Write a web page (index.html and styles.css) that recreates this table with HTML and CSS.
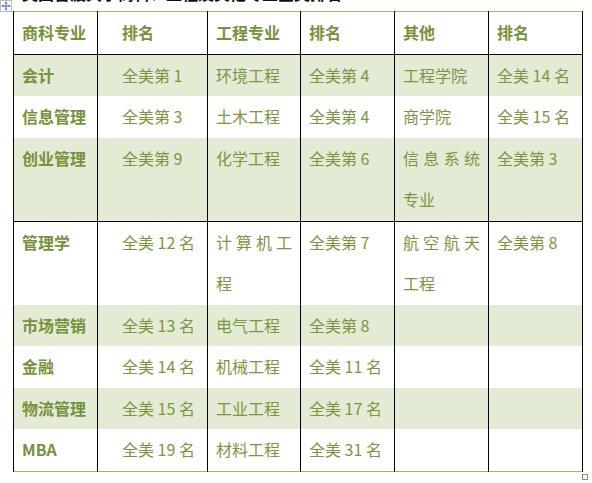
FILE: index.html
```html
<!DOCTYPE html>
<html lang="zh-CN">
<head>
<meta charset="utf-8">
<title>专业排名</title>
<link rel="stylesheet" href="styles.css">
</head>
<body>
<div class="page">
  <div class="lead"><span>美国普渡大学商科、工程及其他专业全美排名</span></div>
  <div class="move-handle">
    <svg viewBox="0 0 12 12" width="12" height="12">
      <rect x="0.5" y="0.5" width="11" height="11" fill="#fff" stroke="#b4bccb"/>
      <path d="M6 2v8M2 6h8" stroke="#3f6fb6" stroke-width="1"/>
      <path d="M6 1.5l-1.6 1.8h3.2zM6 10.5l-1.6-1.8h3.2zM1.5 6l1.8-1.6v3.2zM10.5 6l-1.8-1.6v3.2z" fill="#3f6fb6"/>
    </svg>
  </div>
  <table class="rank">
    <colgroup>
      <col class="c1"><col class="c2"><col class="c3"><col class="c4"><col class="c5"><col class="c6">
    </colgroup>
    <thead>
      <tr class="head">
        <th>商科专业</th><th class="ind">排名</th><th>工程专业</th><th>排名</th><th>其他</th><th>排名</th>
      </tr>
    </thead>
    <tbody>
      <tr class="band">
        <th>会计</th><td class="ind">全美第 1</td><td>环境工程</td><td>全美第 4</td><td>工程学院</td><td>全美 14 名</td>
      </tr>
      <tr>
        <th>信息管理</th><td class="ind">全美第 3</td><td>土木工程</td><td>全美第 4</td><td>商学院</td><td>全美 15 名</td>
      </tr>
      <tr class="band sep">
        <th>创业管理</th><td class="ind">全美第 9</td><td>化学工程</td><td>全美第 6</td><td class="just">信息系统专业</td><td>全美第 3</td>
      </tr>
      <tr>
        <th>管理学</th><td class="ind">全美 12 名</td><td class="just">计算机工程</td><td>全美第 7</td><td class="just">航空航天工程</td><td>全美第 8</td>
      </tr>
      <tr class="band">
        <th>市场营销</th><td class="ind">全美 13 名</td><td>电气工程</td><td>全美第 8</td><td></td><td></td>
      </tr>
      <tr>
        <th>金融</th><td class="ind">全美 14 名</td><td>机械工程</td><td>全美 11 名</td><td></td><td></td>
      </tr>
      <tr class="band">
        <th>物流管理</th><td class="ind">全美 15 名</td><td>工业工程</td><td>全美 17 名</td><td></td><td></td>
      </tr>
      <tr>
        <th>MBA</th><td class="ind">全美 19 名</td><td>材料工程</td><td>全美 31 名</td><td></td><td></td>
      </tr>
    </tbody>
  </table>
  <div class="resize-handle"></div>
</div>
</body>
</html>
```

FILE: styles.css
```css
html, body {
  margin: 0;
  padding: 0;
  background: #ffffff;
}

.page {
  position: relative;
  width: 592px;
  height: 483px;
  overflow: hidden;
  font-family: "Noto Sans CJK SC", "Noto Sans", sans-serif;
}

.lead {
  height: 3px;
  overflow: hidden;
  padding-left: 22px;
  margin-bottom: 1px;
}

.lead span {
  display: block;
  margin-top: -17px;
  font-size: 16px;
  line-height: 20px;
  font-weight: 700;
  color: #111;
  white-space: nowrap;
}

.move-handle {
  position: absolute;
  left: 0;
  top: 0;
  width: 12px;
  height: 12px;
}

.move-handle svg {
  display: block;
}

.rank {
  margin-top: 8px;
  margin-left: 13px;
  width: 569px;
  table-layout: fixed;
  border-collapse: collapse;
  border-top: 1px solid #a4b56c;
  border-bottom: 1px solid #a4b56c;
  color: #76923c;
  font-size: 16px;
  line-height: 41.5px;
}

.c1 { width: 84px; }
.c2 { width: 110px; }
.c3 { width: 93px; }
.c4 { width: 94px; }
.c5 { width: 94px; }
.c6 { width: 94px; }

.rank th,
.rank td {
  border-left: 1px solid #000;
  border-right: 1px solid #000;
  padding: 0 8px;
  text-align: left;
  vertical-align: top;
  white-space: normal;
}

.rank th {
  font-weight: 700;
}

.rank td {
  font-weight: 400;
  color: #7a9642;
}

.rank thead th {
  border-bottom: 1px solid #000;
}

.rank .ind {
  padding-left: 24px;
}

.rank .band th,
.rank .band td {
  background: #e4ebd4;
}

.rank .sep th,
.rank .sep td {
  border-bottom: 1px solid #000;
}

.rank .just {
  text-align: justify;
  text-justify: inter-character;
}

.resize-handle {
  position: absolute;
  left: 582px;
  top: 474px;
  width: 4px;
  height: 4px;
  border: 1px solid #8c8c8c;
  background: #fff;
}
```
